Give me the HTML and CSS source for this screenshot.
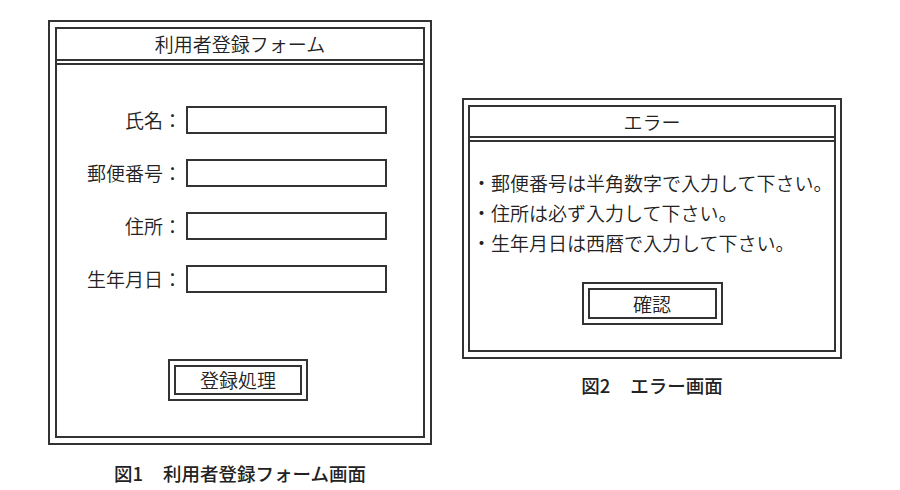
FILE: index.html
```html
<!DOCTYPE html>
<html lang="ja">
<head>
<meta charset="utf-8">
<title>利用者登録フォーム</title>
<link rel="stylesheet" href="styles.css">
</head>
<body>
<div class="sheet">
  <figure class="fig fig-form">
    <div class="win win-form">
      <div class="win-inner">
        <div class="win-title">利用者登録フォーム</div>
        <div class="win-body form-body">
          <div class="row"><span class="label">氏名：</span><span class="field"></span></div>
          <div class="row"><span class="label">郵便番号：</span><span class="field"></span></div>
          <div class="row"><span class="label">住所：</span><span class="field"></span></div>
          <div class="row"><span class="label">生年月日：</span><span class="field"></span></div>
          <div class="btn btn-submit"><span class="btn-inner">登録処理</span></div>
        </div>
      </div>
    </div>
    <figcaption class="caption cap-form"><span class="fig-no">図1</span>利用者登録フォーム画面</figcaption>
  </figure>
  <figure class="fig fig-error">
    <div class="win win-error">
      <div class="win-inner">
        <div class="win-title title-error">エラー</div>
        <div class="win-body error-body">
          <ul class="errors">
            <li>・郵便番号は半角数字で入力して下さい。</li>
            <li>・住所は必ず入力して下さい。</li>
            <li>・生年月日は西暦で入力して下さい。</li>
          </ul>
          <div class="btn btn-ok"><span class="btn-inner">確認</span></div>
        </div>
      </div>
    </div>
    <figcaption class="caption cap-error"><span class="fig-no">図2</span>エラー画面</figcaption>
  </figure>
</div>
</body>
</html>
```
FILE: styles.css
```css
html, body {
  margin: 0;
  padding: 0;
  background: #fff;
}
body {
  width: 900px;
  height: 490px;
  overflow: hidden;
  color: #222;
  font-family: "Noto Sans CJK JP", "Noto Sans", sans-serif;
  font-size: 19px;
  font-weight: 350;
}
.sheet {
  display: flex;
  align-items: flex-start;
  padding: 20px 0 0 48px;
  gap: 30px;
}
.fig {
  margin: 0;
  display: flex;
  flex-direction: column;
  align-items: center;
}
.fig-form { width: 384px; }
.fig-error { width: 380px; margin-top: 78px; }

.win {
  box-sizing: border-box;
  width: 100%;
  border: 2px solid #333;
  padding: 5px;
}
.win-error { padding: 5px 4px; }
.win-inner {
  border: 2px solid #333;
}
.win-title {
  height: 30px;
  line-height: 30px;
  text-align: center;
  border-bottom: 6px double #333;
}
.title-error {
  height: 29px;
  line-height: 29px;
}

.form-body {
  height: 371px;
  box-sizing: border-box;
  padding-top: 41px;
  display: flex;
  flex-direction: column;
}
.row {
  display: flex;
  align-items: center;
  height: 28px;
  margin-bottom: 25px;
}
.label {
  width: 125px;
  text-align: right;
  line-height: 28px;
}
.field {
  box-sizing: border-box;
  width: 201px;
  height: 28px;
  margin-left: 4px;
  border: 2px solid #333;
}

.btn {
  box-sizing: border-box;
  align-self: center;
  border: 2px solid #333;
  padding: 4px;
}
.btn-inner {
  display: block;
  box-sizing: border-box;
  height: 30px;
  line-height: 26px;
  border: 2px solid #333;
  text-align: center;
}
.btn-submit {
  width: 140px;
  margin-top: 41px;
  margin-left: -4px;
}
.btn-ok {
  width: 141px;
  height: 43px;
  margin-top: 24px;
}
.btn-ok .btn-inner { height: 31px; line-height: 27px; }

.error-body {
  box-sizing: border-box;
  height: 208px;
  padding-top: 26px;
  display: flex;
  flex-direction: column;
}
.errors {
  list-style: none;
  margin: 0;
  padding: 0 0 0 2px;
}
.errors li {
  line-height: 30px;
  height: 30px;
  white-space: nowrap;
}

.caption {
  font-size: 18.5px;
  font-weight: 500;
  line-height: 24px;
  color: #222;
}
.fig-no {
  margin-right: 20px;
}
.cap-form { margin-top: 16px; }
.cap-error { margin-top: 14px; }
```
